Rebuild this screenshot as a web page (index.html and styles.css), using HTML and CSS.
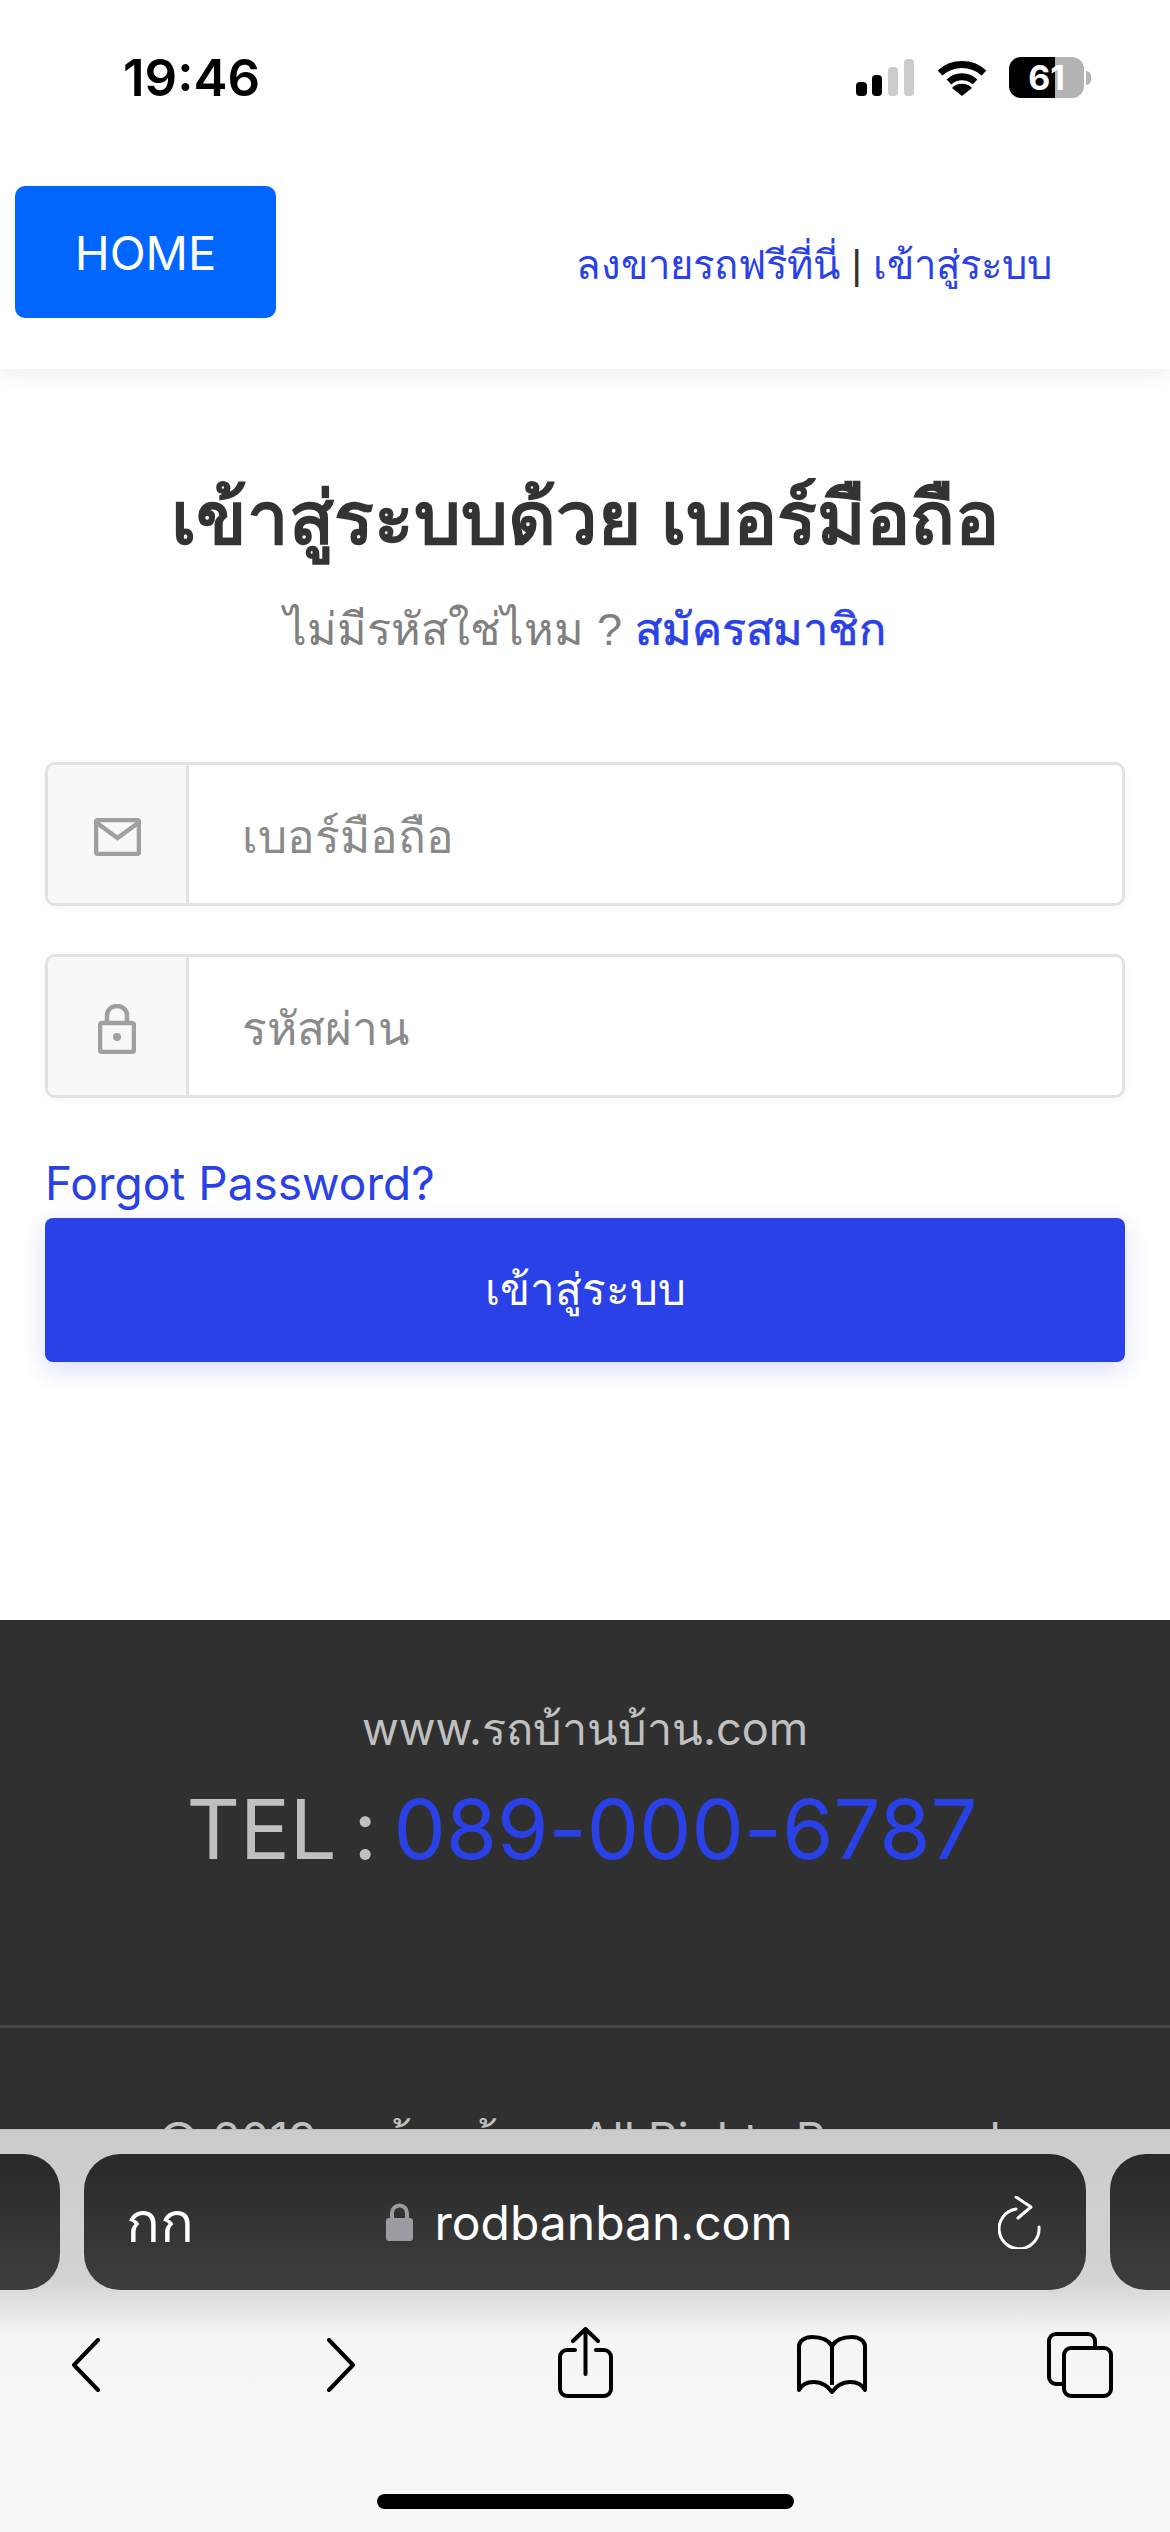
FILE: index.html
```html
<!DOCTYPE html>
<html lang="th">
<head>
    <meta charset="UTF-8">
    <meta name="viewport" content="width=device-width, initial-scale=1.0">
    <title>เข้าสู่ระบบ</title>
    <link rel="stylesheet" href="styles.css">
</head>
<body>
    <div class="screen">
        <header class="site-header">
            <div class="status-bar">
                <span class="time">19:46</span>
                <div class="status-icons">
                    <svg class="signal" width="58" height="37" viewBox="0 0 58 37">
                        <rect x="0" y="23" width="11" height="14" rx="4" fill="#000"/>
                        <rect x="16" y="16" width="10" height="21" rx="4" fill="#000"/>
                        <rect x="32" y="8" width="10" height="29" rx="4" fill="#ccc"/>
                        <rect x="48" y="0" width="10" height="37" rx="4" fill="#ccc"/>
                    </svg>
                    <svg class="wifi" width="50" height="37" viewBox="0 0 50 37">
                        <path d="M3 14A33 33 0 0 1 47 14" fill="none" stroke="#000" stroke-width="7"/>
                        <path d="M12 23A19 19 0 0 1 38 23" fill="none" stroke="#000" stroke-width="7"/>
                        <path d="M25 37L15 29A14 14 0 0 1 35 29Z" fill="#000"/>
                    </svg>
                    <div class="battery"><span>61</span></div>
                    <div class="battery-nub"></div>
                </div>
            </div>
            <nav class="nav-row">
                <a class="home-btn" href="#">HOME</a>
                <div class="nav-links"><a href="#">ลงขายรถฟรีที่นี่</a> | <a href="#">เข้าสู่ระบบ</a></div>
            </nav>
        </header>

        <main class="login">
            <h1>เข้าสู่ระบบด้วย เบอร์มือถือ</h1>
            <p class="sub">ไม่มีรหัสใช่ไหม ? <a href="#">สมัครสมาชิก</a></p>

            <div class="input-group">
                <span class="addon">
                    <svg width="47" height="38" viewBox="0 0 47 38" fill="none" stroke="#a0a0a0" stroke-width="4.500">
                        <rect x="2" y="2" width="43" height="34" rx="2"/>
                        <path d="M3 5L23.500 20L44 5"/>
                    </svg>
                </span>
                <input type="text" placeholder="เบอร์มือถือ">
            </div>
            <div class="input-group">
                <span class="addon">
                    <svg width="38" height="50" viewBox="0 0 38 50" fill="none" stroke="#a0a0a0" stroke-width="4.500">
                        <rect x="2" y="19" width="34" height="29" rx="2"/>
                        <path d="M9 19V11A10 9 0 0 1 29 11V19"/>
                        <circle cx="19" cy="33" r="4" fill="#a0a0a0" stroke="none"/>
                    </svg>
                </span>
                <input type="password" placeholder="รหัสผ่าน">
            </div>

            <a class="forgot" href="#">Forgot Password?</a>
            <button class="submit" type="button">เข้าสู่ระบบ</button>
        </main>

        <footer class="site-footer">
            <div class="footer-top">
                <div class="footer-site">www.รถบ้านบ้าน.com</div>
                <div class="footer-tel">TEL : <a href="#">089-000-6787</a></div>
            </div>
            <div class="copyright">© 2019 รถบ้านบ้าน. All Rights Reserved</div>
        </footer>

        <!-- แถบ Safari ด้านล่าง -->
        <div class="browser-bar">
            <div class="tabs">
                <div class="tab-stub"></div>
                <div class="url-bar">
                    <span class="aa">กก</span>
                    <div class="url">
                        <svg width="27" height="38" viewBox="0 0 27 38">
                            <path d="M6 17V10A7.500 7.500 0 0 1 21 10V17" fill="none" stroke="#9b9ba1" stroke-width="4"/>
                            <rect x="0" y="15" width="27" height="23" rx="3" fill="#9b9ba1"/>
                        </svg>
                        <span>rodbanban.com</span>
                    </div>
                    <svg class="reload" width="44" height="53" viewBox="0 0 44 53" fill="none" stroke="#fff" stroke-width="3" stroke-linecap="round" stroke-linejoin="round">
                        <path d="M18 13A20 20 0 1 0 41 31"/>
                        <path d="M18 1L33 11L20 22"/>
                    </svg>
                </div>
                <div class="tab-stub"></div>
            </div>
            <div class="tools">
                <svg class="tool-back" width="28" height="54" viewBox="0 0 28 54" fill="none" stroke="#000" stroke-width="4" stroke-linecap="round" stroke-linejoin="round">
                    <path d="M26 2L2 27L26 52"/>
                </svg>
                <svg class="tool-forward" width="28" height="54" viewBox="0 0 28 54" fill="none" stroke="#000" stroke-width="4" stroke-linecap="round" stroke-linejoin="round">
                    <path d="M2 2L26 27L2 52"/>
                </svg>
                <svg class="tool-share" width="55" height="71" viewBox="0 0 55 71" fill="none" stroke="#000" stroke-width="4" stroke-linecap="round" stroke-linejoin="round">
                    <path d="M17 23H9A7 7 0 0 0 2 30V62A7 7 0 0 0 9 69H46A7 7 0 0 0 53 62V30A7 7 0 0 0 46 23H38"/>
                    <path d="M27.500 47V2M15 14L27.500 2L40 14"/>
                </svg>
                <svg class="tool-book" width="70" height="59" viewBox="0 0 70 59" fill="none" stroke="#000" stroke-width="4" stroke-linejoin="round">
                    <path d="M35 11C31 4 24 2 15 2C8 2 2 6 2 11V55C8 44 26 44 35 57C44 44 62 44 68 55V11C68 6 62 2 55 2C46 2 39 4 35 11V50"/>
                </svg>
                <svg class="tool-tabs" width="66" height="66" viewBox="0 0 66 66" fill="none" stroke="#000" stroke-width="4" stroke-linejoin="round">
                    <path d="M15 52H9A7 7 0 0 1 2 45V9A7 7 0 0 1 9 2H41A7 7 0 0 1 48 9V16"/>
                    <rect x="17" y="16" width="47" height="48" rx="7"/>
                </svg>
            </div>
            <div class="home-indicator"></div>
        </div>
    </div>
</body>
</html>
```

FILE: styles.css
```css
* {
    box-sizing: border-box;
}
html, body {
    margin: 0;
    padding: 0;
}
body {
    font-family: "Liberation Sans", "Noto Sans", sans-serif;
    background-color: #fff;
}
a {
    color: #2a41e8;
    text-decoration: none;
}
.screen {
    position: relative;
    width: 1170px;
    height: 2532px;
    overflow: hidden;
}

/* header */
.site-header {
    height: 369px;
    background-color: #fff;
    box-shadow: 0 0 28px rgba(0, 0, 0, 0.1);
    position: relative;
}
.status-bar {
    height: 186px;
    padding: 50px 79px 0 123px;
    display: flex;
    justify-content: space-between;
    align-items: flex-start;
}
.time {
    font-family: Inter, sans-serif;
    font-weight: 600;
    font-size: 51px;
    line-height: 56px;
    color: #000;
}
.status-icons {
    display: flex;
    align-items: center;
    margin-top: 7px;
}
.wifi {
    margin-left: 23px;
}
.battery {
    width: 75px;
    height: 41px;
    margin-left: 22px;
    border-radius: 12px;
    background: linear-gradient(to right, #000 46px, #b3b3b3 46px);
    color: #fff;
    font-family: Inter, sans-serif;
    font-weight: 700;
    font-size: 34px;
    line-height: 41px;
    text-align: center;
}
.battery-nub {
    width: 5px;
    height: 14px;
    margin-left: 2px;
    border-radius: 0 7px 7px 0;
    background-color: #b3b3b3;
}
.nav-row {
    display: flex;
    justify-content: space-between;
    padding: 0 118px 0 15px;
}
.home-btn {
    display: block;
    width: 261px;
    height: 132px;
    line-height: 134px;
    text-align: center;
    background-color: #0066ff;
    border-radius: 10px;
    color: #fff;
    font-family: Inter, sans-serif;
    font-size: 47px;
}
.nav-links {
    font-size: 40px;
    color: #333;
    padding-top: 47px;
}

/* login form */
.login {
    height: 1251px;
    padding: 0 45px;
    background-color: #fff;
}
.login h1 {
    margin: 0;
    padding-top: 108px;
    font-size: 74px;
    line-height: 84px;
    color: #333;
    text-align: center;
}
.sub {
    margin: 0 0 102px;
    padding-top: 39px;
    font-size: 45px;
    line-height: 60px;
    color: #808080;
    text-align: center;
}
.sub a {
    -webkit-text-stroke: 0.7px #2a41e8;
}
.input-group {
    display: flex;
    height: 144px;
    margin-bottom: 48px;
    background-color: #fff;
    border: 3px solid #e2e2e2;
    border-radius: 10px;
    box-shadow: 0 2px 8px rgba(0, 0, 0, 0.04);
    overflow: hidden;
}
.addon {
    width: 141px;
    flex: none;
    display: flex;
    align-items: center;
    justify-content: center;
    padding-top: 5px;
    background-color: #f8f8f8;
    border-right: 3px solid #e2e2e2;
}
.input-group input {
    flex: 1;
    min-width: 0;
    border: none;
    outline: none;
    padding: 5px 0 0 53px;
    font-family: "Liberation Sans", "Noto Sans", sans-serif;
    font-size: 46px;
    color: #333;
}
.input-group input::placeholder {
    color: #8a8a8a;
    opacity: 1;
}
.forgot {
    display: block;
    margin-top: 57px;
    font-family: Inter, sans-serif;
    font-size: 46px;
    line-height: 56px;
}
.submit {
    display: block;
    width: 100%;
    height: 144px;
    margin-top: 7px;
    padding: 0 0 3px;
    border: none;
    border-radius: 8px;
    background-color: #2a41e8;
    box-shadow: 0 8px 24px rgba(42, 65, 232, 0.18);
    color: #fff;
    font-family: "Liberation Sans", "Noto Sans", sans-serif;
    font-size: 44px;
}

/* footer */
.site-footer {
    height: 600px;
    background-color: #303030;
    text-align: center;
    font-family: Inter, sans-serif;
}
.footer-top {
    height: 408px;
    padding-top: 74px;
    border-bottom: 3px solid #484848;
}
.footer-site {
    font-size: 45px;
    line-height: 70px;
    color: #c0c0c0;
}
.footer-tel {
    font-size: 83px;
    line-height: 104px;
    margin-top: 13px;
    margin-right: 6px;
    color: #c0c0c0;
    word-spacing: -7px;
    font-feature-settings: "calt" 0;
}
.copyright {
    padding: 83px 12px 0 0;
    font-size: 46px;
    line-height: 56px;
    color: #c0c0c0;
}

/* safari toolbar, over the page */
.browser-bar {
    position: absolute;
    left: 0;
    right: 0;
    bottom: 0;
    height: 403px;
    padding-top: 24px;
    background: linear-gradient(to bottom, #cbcbcb 0, #d3d3d3 150px, #f5f5f5 205px, #f8f8f8 100%);
    border-top: 1px solid #bbb;
}
.tabs {
    display: flex;
    gap: 24px;
    margin-left: -942px;
    height: 136px;
}
.tab-stub {
    width: 1002px;
    flex: none;
    border-radius: 36px;
    background: linear-gradient(to bottom, #292929, #3e3e3e);
}
.url-bar {
    width: 1002px;
    flex: none;
    display: flex;
    align-items: center;
    justify-content: space-between;
    padding: 0 44px 0 42px;
    border-radius: 36px;
    background: linear-gradient(to bottom, #292929, #3e3e3e);
    color: #fff;
    position: relative;
}
.aa {
    font-size: 56px;
}
.url {
    display: flex;
    align-items: center;
    gap: 22px;
    margin-right: 14px;
    font-family: Inter, sans-serif;
    font-size: 48px;
}
.tools {
    display: flex;
    align-items: flex-start;
    height: 204px;
    padding-top: 37px;
}
.tool-back {
    margin: 11px 0 0 72px;
}
.tool-forward {
    margin: 11px 0 0 227px;
}
.tool-share {
    margin-left: 203px;
}
.tool-book {
    margin: 8px 0 0 184px;
}
.tool-tabs {
    margin: 5px 0 0 180px;
}
.home-indicator {
    width: 417px;
    height: 15px;
    margin: 0 auto;
    border-radius: 8px;
    background-color: #000;
}
```
